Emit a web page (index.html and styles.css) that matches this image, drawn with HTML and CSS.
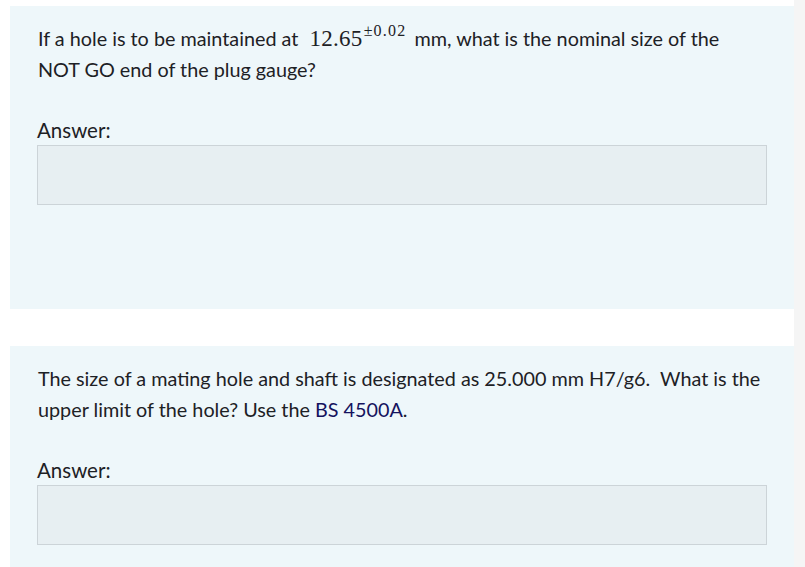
FILE: index.html
```html
<!DOCTYPE html>
<html>
<head>
<meta charset="utf-8">
<link rel="stylesheet" href="styles.css">
</head>
<body>
<div class="layout">
  <main class="main">
    <section class="card card-first">
      <p class="qtext">If a hole is to be maintained at <span class="math">12.65<sup class="math-sup">±0.02</sup></span> mm, what is the nominal size of the NOT GO end of the plug gauge?</p>
      <div class="answer">
        <label class="answer-label">Answer:</label>
        <div class="answer-box"></div>
      </div>
    </section>
    <section class="card card-second">
      <p class="qtext">The size of a mating hole and shaft is designated as 25.000 mm H7/g6.&nbsp; What is the upper limit of the hole? Use the <span class="ref">BS 4500A</span>.</p>
      <div class="answer">
        <label class="answer-label">Answer:</label>
        <div class="answer-box"></div>
      </div>
    </section>
  </main>
  <div class="side"></div>
</div>
</body>
</html>
```
FILE: styles.css
```css
html, body {
  margin: 0;
  padding: 0;
  background: #ffffff;
  height: 100%;
  overflow: hidden;
}
body {
  font-family: Lato, "Noto Sans", sans-serif;
  color: #1d2125;
}
.layout {
  display: flex;
  height: 567px;
}
.main {
  width: 784px;
  padding: 6px 0 0 10px;
  display: flex;
  flex-direction: column;
  gap: 37px;
}
.side {
  flex: 1;
  background: #f5f5f5;
}
.card {
  background: #eef7fa;
  padding: 17px 27px 0 27px;
  box-sizing: border-box;
}
.card-first {
  height: 303px;
}
.card-second {
  flex: 1;
}
.qtext {
  margin: 0;
  font-size: 19.8px;
  line-height: 31px;
  padding: 0 3px 0 1px;
}
.math {
  font-family: "Liberation Serif", "DejaVu Serif", serif;
  font-size: 23px;
  line-height: 0;
  margin: 0 3px 0 6px;
  letter-spacing: 0.3px;
}
.math-sup {
  font-size: 16px;
  line-height: 0;
  vertical-align: 10px;
  margin-left: 1px;
  letter-spacing: 1.2px;
}
.ref {
  color: #15135e;
}
.answer {
  margin-top: 33px;
  display: flex;
  flex-direction: column;
  gap: 3px;
}
.answer-label {
  font-size: 20.5px;
  line-height: 24px;
}
.answer-box {
  height: 58px;
  background: #e7eff2;
  border: 1px solid #ccd4d8;
}
```
